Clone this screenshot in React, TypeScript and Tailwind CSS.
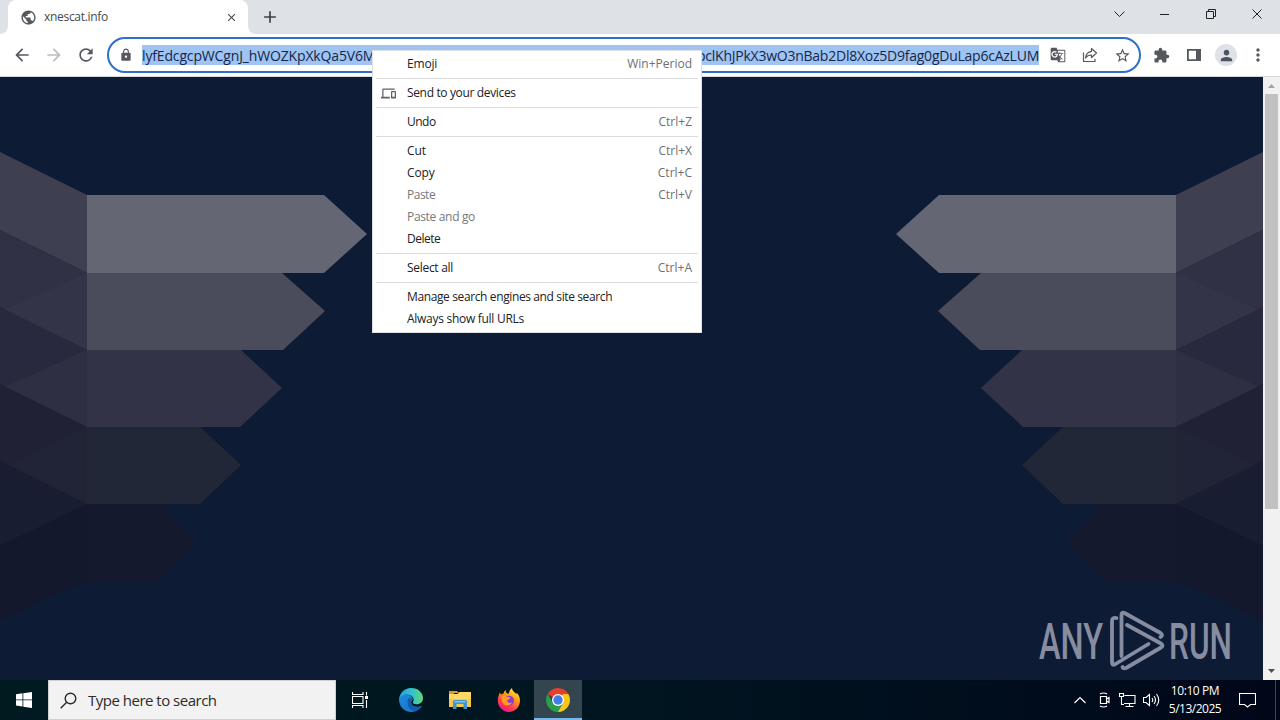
import type { ReactNode } from 'react';
import {
  MdAdd,
  MdArrowBack,
  MdArrowForward,
  MdClose,
  MdExtension,
  MdGTranslate,
  MdLock,
  MdMoreVert,
  MdOutlineDevices,
  MdPerson,
  MdPublic,
  MdRefresh,
  MdStarBorder,
} from 'react-icons/md';

/* ------------------------------------------------------------------ */
/*  Data                                                               */
/* ------------------------------------------------------------------ */

type MenuEntry = {
  label: string;
  shortcut?: string;
  disabled?: boolean;
  icon?: ReactNode;
  tracking: string;
};

const MENU_GROUPS: MenuEntry[][] = [
  [{ label: 'Emoji', shortcut: 'Win+Period', tracking: 'tracking-[-0.2px]' }],
  [
    {
      label: 'Send to your devices',
      tracking: 'tracking-[-0.35px]',
      icon: <MdOutlineDevices size={15} />,
    },
  ],
  [{ label: 'Undo', shortcut: 'Ctrl+Z', tracking: 'tracking-[-0.5px]' }],
  [
    { label: 'Cut', shortcut: 'Ctrl+X', tracking: 'tracking-[-0.1px]' },
    { label: 'Copy', shortcut: 'Ctrl+C', tracking: 'tracking-[-0.1px]' },
    { label: 'Paste', shortcut: 'Ctrl+V', disabled: true, tracking: 'tracking-[-0.5px]' },
    { label: 'Paste and go', disabled: true, tracking: 'tracking-[-0.33px]' },
    { label: 'Delete', tracking: 'tracking-[-0.5px]' },
  ],
  [{ label: 'Select all', shortcut: 'Ctrl+A', tracking: 'tracking-[-0.3px]' }],
  [
    { label: 'Manage search engines and site search', tracking: 'tracking-[-0.38px]' },
    { label: 'Always show full URLs', tracking: 'tracking-[-0.28px]' },
  ],
];

/* ------------------------------------------------------------------ */
/*  Browser chrome                                                     */
/* ------------------------------------------------------------------ */

function TabStrip() {
  return (
    <div className="flex h-[34px] bg-[#dee1e6]">
      <div className="flex w-2 items-end bg-white">
        <div className="h-full w-full rounded-br-lg bg-[#dee1e6]" />
      </div>
      <div className="bg-[#dee1e6]">
        <div className="flex h-full w-60 items-center rounded-t-lg bg-white pl-3 pr-2.5">
          <MdPublic size={17} className="shrink-0 text-[#55585d]" />
          <span className="ml-[7px] flex-1 text-[12px] tracking-[-0.3px] text-[#45494d]">xnescat.info</span>
          <MdClose size={13} className="text-[#45494d]" />
        </div>
      </div>
      <div className="w-2 bg-white">
        <div className="h-full w-full rounded-bl-lg bg-[#dee1e6]" />
      </div>
      <div className="flex flex-1 items-center pl-1 text-[#3c4043]">
        <MdAdd size={20} />
      </div>
      <div className="flex items-start text-[#222]">
        <svg width="45" height="28" viewBox="0 0 45 28" fill="none" stroke="currentColor">
          <path d="M17.500 11.500l5 5 5-5" />
        </svg>
        <svg width="46" height="28" viewBox="0 0 46 28" fill="none" stroke="currentColor">
          <path d="M18 14.500h9" />
        </svg>
        <svg width="46" height="28" viewBox="0 0 46 28" fill="none" stroke="currentColor">
          <path d="M18.500 11.500h7v7h-7zM20.500 11.500v-2h7v7h-2" />
        </svg>
        <svg width="46" height="28" viewBox="0 0 46 28" fill="none" stroke="currentColor">
          <path d="M18.500 9.500l9 9M27.500 9.500l-9 9" />
        </svg>
      </div>
    </div>
  );
}

function ShareIcon() {
  return (
    <svg width="18" height="18" viewBox="0 0 18 18" fill="none" stroke="currentColor" strokeWidth="1.2">
      <path d="M2.500 6.500v9h11.500v-2.500" />
      <path d="M10.500 2.500l5 4.500-5 4.500V9c-3 0-4.700 1-6 3 .4-3.600 2.300-6.200 6-6.700z" strokeLinejoin="round" />
    </svg>
  );
}

function Toolbar() {
  return (
    <div className="flex h-[43px] items-center border-b border-[#d5d7da] bg-white text-[#55585d]">
      <div className="flex w-[107px] items-center gap-3 pl-3">
        <MdArrowBack size={20} />
        <MdArrowForward size={20} className="text-[#babcbe]" />
        <MdRefresh size={20} />
      </div>
      <div className="flex h-9 w-[1034px] items-center rounded-full border-2 border-[#2f6fc9] pl-2.5">
        <MdLock size={14} className="shrink-0" />
        <div className="ml-[9px] flex h-5 w-[897px] items-center justify-between overflow-hidden bg-[#a0c4f2] text-[14px] text-[#14274a]">
          <span className="tracking-[-0.15px]">lyfEdcgcpWCgnJ_hWOZKpXkQa5V6M</span>
          <span className="tracking-[-0.24px]">bclKhJPkX3wO3nBab2Dl8Xoz5D9fag0gDuLap6cAzLUM</span>
        </div>
        <div className="ml-[11px] flex items-center gap-[15px]">
          <MdGTranslate size={16} />
          <ShareIcon />
          <MdStarBorder size={17} />
        </div>
      </div>
      <div className="flex flex-1 items-center pl-3">
        <MdExtension size={17} />
        <svg className="ml-4" width="16" height="16" viewBox="0 0 16 16" fill="currentColor">
          <path fillRule="evenodd" d="M1 2h14v12H1zM2.800 3.800v8.400H10V3.800z" />
        </svg>
        <div className="ml-[13px] flex size-[22px] items-center justify-center rounded-full bg-[#dee1e6] text-[#4b5263]">
          <MdPerson size={17} />
        </div>
        <MdMoreVert size={20} className="ml-[11px]" />
      </div>
    </div>
  );
}

/* ------------------------------------------------------------------ */
/*  Page content                                                       */
/* ------------------------------------------------------------------ */

function Arms() {
  return (
    <>
      <path fill="#3e4052" d="M0 75L87 118V196L0 153z" />
      <path fill="#303145" d="M0 153L87 196V273L0 230z" />
      <path fill="#333447" d="M87 196V273L4 233z" />
      <path fill="#28293e" d="M0 230L87 273V350L0 307z" />
      <path fill="#2e2f42" d="M87 273V350L4 310z" />
      <path fill="#202135" d="M0 307L87 350V427L0 384z" />
      <path fill="#212437" d="M87 350V427L8 388z" />
      <path fill="#191d31" d="M0 384L87 427L0 469z" />
      <path fill="#14182c" d="M87 427V504L0 543V469z" />
      <path fill="#646673" d="M87 118H324L367 157L324 196H87z" />
      <path fill="#4b4c5b" d="M87 196H282L325 234L283 273H87z" />
      <path fill="#323346" d="M87 273H241L282 311L240 350H87z" />
      <path fill="#222738" d="M87 350H200L241 388L200 427H87z" />
      <path fill="#15192d" d="M87 427H160L197 465L160 504H87z" />
    </>
  );
}

function Watermark() {
  return (
    <g fill="#878da0" stroke="none" fontFamily="Roboto, 'Liberation Sans', sans-serif" fontSize="50" fontWeight="500">
      <text x="1039" y="582" textLength="64" lengthAdjust="spacingAndGlyphs">
        ANY
      </text>
      <text x="1169" y="582" textLength="63" lengthAdjust="spacingAndGlyphs">
        RUN
      </text>
      {/* Two interlocking outlines of a play triangle */}
      <g fill="none" stroke="#878da0" strokeWidth="3.800" strokeLinecap="round" strokeLinejoin="round">
        <path d="M1116.500 541q-4.500-1-4.500 3v41q0 4 3.500 2l33-20" />
        <path d="M1121.500 579V538q0-3.500 3-2l36 20q3 2 0 4" />
        <path d="M1127 548l34 18.500q3 2 0 4l-35 20.500q-3 1-3.500-1" />
      </g>
    </g>
  );
}

function PageContent() {
  return (
    <div className="flex h-[603px] bg-[#0e1b35]">
      <svg className="overflow-visible" width="1263" height="603" viewBox="0 0 1263 603">
        <Arms />
        <g transform="matrix(-1 0 0 1 1263 0)">
          <Arms />
        </g>
        <Watermark />
      </svg>
      <div className="flex w-[17px] flex-col items-center bg-[#f1f1f1]">
        <svg width="17" height="17" viewBox="0 0 17 17" fill="#a3a3a3">
          <path d="M5 11l3.500-4 3.500 4z" />
        </svg>
        <div className="h-[415px] w-[13px] bg-[#c1c1c1]" />
        <div className="flex-1" />
        <svg width="17" height="17" viewBox="0 0 17 17" fill="#505050">
          <path d="M5 6l3.500 4 3.500-4z" />
        </svg>
      </div>
    </div>
  );
}

/* ------------------------------------------------------------------ */
/*  Context menu                                                       */
/* ------------------------------------------------------------------ */

function ContextMenu() {
  return (
    <div
      className="absolute left-[372px] top-[50px] w-[330px] border border-[#dfe1e5] bg-white py-0.5 text-[12px]"
      role="menu"
    >
      {MENU_GROUPS.map((group, idx) => (
        <div key={idx}>
          {idx > 0 && <div className="mx-[3px] my-[3px] h-px bg-[#dadce0]" />}
          {group.map((item) => (
            <div key={item.label} role="menuitem" className="flex h-[22px] items-center pr-[9px]">
              <span className="flex w-[34px] shrink-0 pl-2 text-[#5f6368]">{item.icon}</span>
              <span
                className={[
                  'flex-1 whitespace-nowrap',
                  item.tracking,
                  item.disabled ? 'text-[#75787c]' : 'text-[#202124]',
                ].join(' ')}
              >
                {item.label}
              </span>
              <span className="text-[#6c7075]">{item.shortcut}</span>
            </div>
          ))}
        </div>
      ))}
    </div>
  );
}

/* ------------------------------------------------------------------ */
/*  Taskbar                                                            */
/* ------------------------------------------------------------------ */

function EdgeIcon() {
  return (
    <svg width="24" height="24" viewBox="0 0 24 24">
      <defs>
        <linearGradient id="edge-top" x1="0" y1="0.4" x2="1" y2="0.4">
          <stop offset="0" stopColor="#209fe0" />
          <stop offset="0.55" stopColor="#34c3cf" />
          <stop offset="1" stopColor="#62d774" />
        </linearGradient>
        <linearGradient id="edge-low" x1="0" y1="0" x2="0.8" y2="1">
          <stop offset="0" stopColor="#1b8bdc" />
          <stop offset="1" stopColor="#1874cc" />
        </linearGradient>
      </defs>
      <path fill="url(#edge-low)" d="M0 11C1 7 5 5.500 9 6.500c4 1 5 4 4.500 5.500-2 1-2 5 1.500 6.300 3 1.200 6 .5 8-.8C20.500 22 16.500 24 12 24 5 24 0 18.500 0 11z" />
      <path fill="#155bab" d="M8.500 13.500c0-3 2.300-4.500 4.800-3-1.800 1.500-1.600 6 1.800 7.600 3 1.300 5.900.6 7.900-.6-2 3.200-5 5.300-8 5.300-3.700 0-6.500-4.500-6.500-9.300z" />
      <path fill="url(#edge-top)" d="M0 11.500C.5 5 5.500 0 12 0c7.500 0 12 5 12 10 0 4-3 6.300-6.500 6.300-3 0-4.200-1-3.500-2.200 2-3.400-.8-7.600-6-7.600-4.500 0-7 2.500-8 5z" />
    </svg>
  );
}

function ExplorerIcon() {
  return (
    <svg width="22" height="20" viewBox="0 0 22 20">
      <path fill="#dd9a21" d="M0 1h8l2 2h-5v3H0z" />
      <path fill="#ffd866" d="M0 4h8.500L10.500 2H22v15H0z" />
      <path fill="#f5c84d" d="M0 9h22v8H0z" />
      <path fill="#3d94cf" d="M4 11.500q0-1.500 1.500-1.500h11q1.500 0 1.500 1.500V19h-3.500v-5h-7v5H4z" />
      <path fill="#77c3ee" d="M5.500 11h11v1.500h-11z" />
    </svg>
  );
}

function FirefoxIcon() {
  return (
    <svg width="24" height="24" viewBox="0 0 24 24">
      <defs>
        <linearGradient id="fox-body" x1="0.8" y1="0" x2="0.25" y2="1">
          <stop offset="0" stopColor="#fff04a" />
          <stop offset="0.4" stopColor="#ff980e" />
          <stop offset="0.72" stopColor="#ff3a55" />
          <stop offset="1" stopColor="#e31587" />
        </linearGradient>
      </defs>
      <path fill="url(#fox-body)" d="M3 4c.2 1.300.5 2 .9 2.500L6.500 5.500C7 3.500 8 2.500 9 2c-.4 1.500 0 2.500 1 3.500h2C12 3 13.500 1 15 0c.2 2.800 1.800 3.500 3.300 5 .5.400.9 1 1.200 1.500v-2c2.300 2.300 3.500 5.300 3.500 8C23 19 18 24 12 24S.8 19 .8 13C.8 9 2 6.500 3 4z" />
      <circle cx="12" cy="12.800" r="5" fill="#8a3bd8" />
      <path fill="#ff9b21" d="M4.500 9c2-1.500 4-1.500 5.500-.2 1.500.2 3 .2 3.300 1-.3 1.500-2.500 1.700-3.300 3 .5 2 3 2.700 5 1.500-1 3-5 4.200-8 2.200C5 14.700 4.500 12 4.500 9z" />
    </svg>
  );
}

function ChromeIcon() {
  return (
    <svg width="24" height="24" viewBox="0 0 24 24">
      <path fill="#e3402f" d="M12 12L1.610 6A12 12 0 0 1 22.390 6z" />
      <path fill="#fbc619" d="M12 12L17.200 6H22.390A12 12 0 0 1 12 24z" />
      <path fill="#2a9e49" d="M12 24A12 12 0 0 1 1.610 6L6.800 15 12 12l5.200 3z" />
      <path fill="#e3402f" d="M12 6h10.390L12 4z" />
      <circle cx="12" cy="12" r="6" fill="#fff" />
      <circle cx="12" cy="12" r="4.700" fill="#3f7eea" />
    </svg>
  );
}

function Taskbar() {
  return (
    <div className="flex h-10 bg-gradient-to-r from-[#001a20] via-[#001520] to-[#000719] text-white">
      <div className="flex w-12 items-center justify-center">
        <svg width="16" height="16" viewBox="0 0 16 16" fill="currentColor">
          <path d="M0 2.200L6.500 1.300v6.200H0zM7.300 1.200L16 0v7.500H7.300zM0 8.300h6.500v6.200L0 13.600zM7.300 8.300H16V16l-8.700-1.200z" />
        </svg>
      </div>
      <div className="flex w-72 items-center border border-[#d0d0d0] bg-[#f2f2f2] pl-[11px] text-[#2b2b2b]">
        <svg width="17" height="17" viewBox="0 0 17 17" fill="none" stroke="currentColor" strokeWidth="1.400">
          <circle cx="10.500" cy="6.500" r="5.300" />
          <path d="M6.700 10.300L.7 16.300" />
        </svg>
        <span className="ml-[11px] text-[15px] tracking-[-0.5px]">Type here to search</span>
      </div>
      <div className="flex w-12 items-center justify-center">
        <svg width="17" height="16" viewBox="0 0 17 16" fill="none" stroke="currentColor" strokeWidth="1.100">
          <path d="M.5 4.500h10.500v7H.5zM.5 0v2.500H11V0M.5 16v-2.500H11V16M14.500 0v3.500M14.500 8v8" />
          <path d="M13 4h3v3h-3z" fill="currentColor" stroke="none" />
        </svg>
      </div>
      <div className="ml-[3px] flex w-12 items-center justify-center">
        <EdgeIcon />
      </div>
      <div className="ml-px flex w-12 items-center justify-center">
        <ExplorerIcon />
      </div>
      <div className="ml-px flex w-12 items-center justify-center">
        <FirefoxIcon />
      </div>
      <div className="ml-px flex w-12 items-center justify-center border-b-2 border-[#76b9ed] bg-[#33464f] pt-0.5">
        <ChromeIcon />
      </div>
      <div className="flex flex-1 items-center justify-end">
        <svg width="12" height="8" viewBox="0 0 12 8" fill="none" stroke="currentColor" strokeWidth="1.200">
          <path d="M.5 7L6 1.500 11.500 7" />
        </svg>
        <svg className="ml-[11px]" width="14" height="16" viewBox="0 0 14 16" fill="none" stroke="currentColor" strokeWidth="1.200">
          <path d="M3.500 4.500h6v7h-6zM9.500 7l2.500-1.500v5L9.500 9M3 2q3.500-2 7 0M3 14q3.500 2 7 0" />
        </svg>
        <svg className="ml-2" width="17" height="15" viewBox="0 0 17 15" fill="none" stroke="currentColor" strokeWidth="1.100">
          <path d="M5.500 2.500H16v8H5M10.500 10.500v3M6.500 13.500h8M.5.5h4v3h-4zM2.500 3.500v8H5" />
        </svg>
        <svg className="ml-[7px]" width="17" height="14" viewBox="0 0 17 14" fill="none" stroke="currentColor" strokeWidth="1.100">
          <path d="M.5 4.500h2.500l3.500-3v11l-3.500-3H.5zM9 5q1.500 2 0 4M11 3q3 4 0 8M13.500 1q4.500 6 0 12" />
        </svg>
        <div className="flex w-[70px] flex-col text-center text-[12px] leading-[18px]">
          <span className="whitespace-nowrap tracking-[-0.4px]">10:10 PM</span>
          <span className="whitespace-nowrap tracking-[-0.5px]">5/13/2025</span>
        </div>
        <svg className="ml-[9px] mr-[19px]" width="17" height="16" viewBox="0 0 17 16" fill="none" stroke="currentColor" strokeWidth="1.100">
          <path d="M.5 1.500h16v11h-5l-3 2.500-3-2.500h-5z" />
        </svg>
        <div className="mr-1 h-full w-px bg-[#3a4555]" />
      </div>
    </div>
  );
}

export default function App() {
  return (
    <div className="relative flex h-[720px] w-[1280px] flex-col overflow-hidden font-['Open_Sans','Noto_Sans',sans-serif] select-none">
      <TabStrip />
      <Toolbar />
      <PageContent />
      <Taskbar />
      <ContextMenu />
    </div>
  );
}
